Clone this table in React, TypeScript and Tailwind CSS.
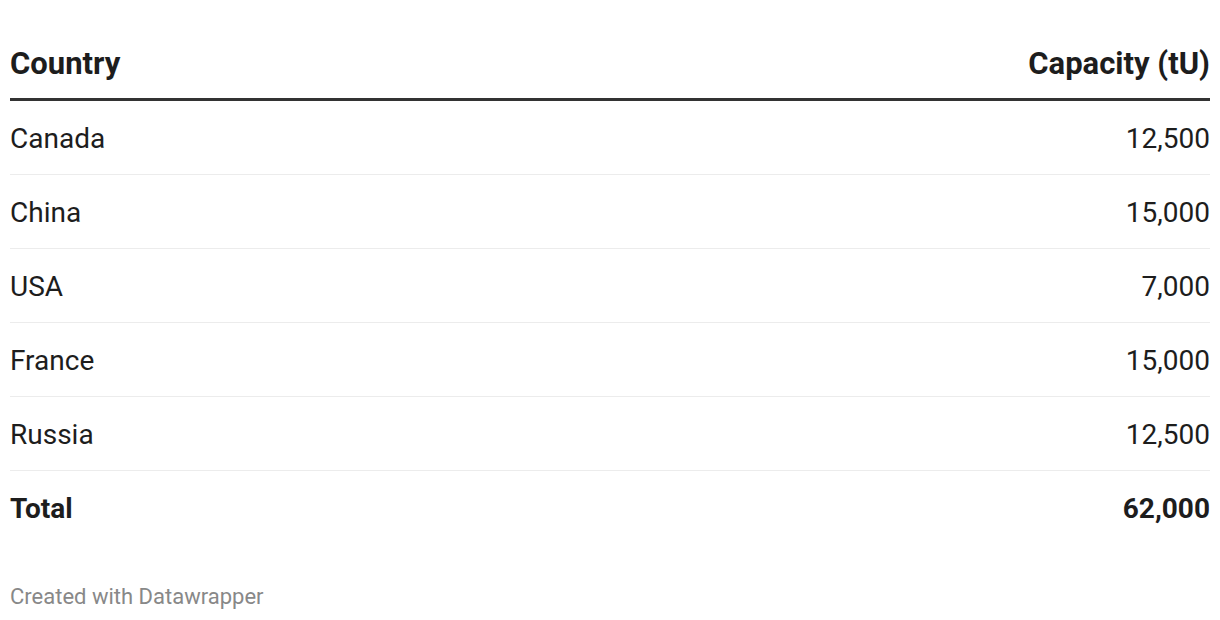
const rows: [string, string][] = [
  ["Canada", "12,500"],
  ["China", "15,000"],
  ["USA", "7,000"],
  ["France", "15,000"],
  ["Russia", "12,500"],
];

export default function App() {
  return (
    <div className="w-[1220px] h-[620px] bg-white px-[10px] text-[#1d1d1d] font-['Roboto',sans-serif]">
      <div className="h-[101px] pt-[30px] flex items-center justify-between border-b-[3px] border-[#333333] text-[31px] leading-[36px] font-bold">
        <span>Country</span>
        <span>Capacity (tU)</span>
      </div>
      {rows.map(([country, value]) => (
        <div
          key={country}
          className="h-[74px] pt-[2px] flex items-center justify-between border-b border-[#ececec] text-[28px] leading-[34px]"
        >
          <span>{country}</span>
          <span>{value}</span>
        </div>
      ))}
      <div className="h-[74px] pt-[2px] flex items-center justify-between text-[28px] leading-[34px] font-bold">
        <span>Total</span>
        <span>62,000</span>
      </div>
      <p className="mt-[36px] text-[22px] leading-[32px] text-[#888888]">Created with Datawrapper</p>
    </div>
  );
}
